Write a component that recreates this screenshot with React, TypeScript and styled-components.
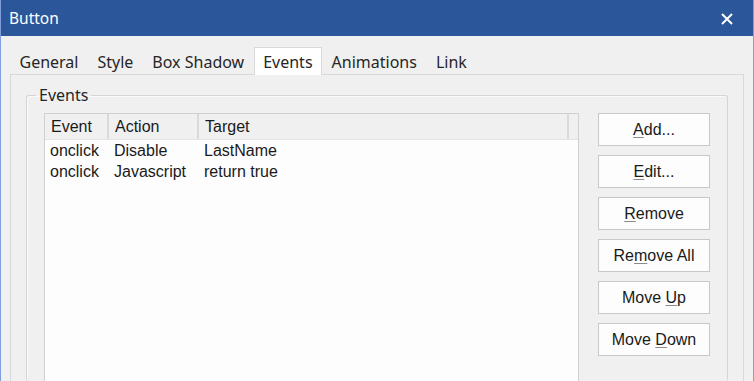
import React, { FC } from 'react';
import styled, { createGlobalStyle } from 'styled-components';

const GlobalStyle = createGlobalStyle`
  html, body {
    margin: 0;
    padding: 0;
    background: #f0f0f0;
  }
`;

interface EventRow {
  event: string;
  action: string;
  target: string;
}

const rows: EventRow[] = [
  { event: 'onclick', action: 'Disable', target: 'LastName' },
  { event: 'onclick', action: 'Javascript', target: 'return true' },
];

const tabs = ['General', 'Style', 'Box Shadow', 'Events', 'Animations', 'Link'];

// label with the access key underlined
const buttons: { before: string; key: string; after: string }[] = [
  { before: '', key: 'A', after: 'dd...' },
  { before: '', key: 'E', after: 'dit...' },
  { before: '', key: 'R', after: 'emove' },
  { before: 'Re', key: 'm', after: 'ove All' },
  { before: 'Move ', key: 'U', after: 'p' },
  { before: 'Move ', key: 'D', after: 'own' },
];

const App: FC = () => {
  return (
    <>
      <GlobalStyle />
      <Window>
        <TitleBar>
          <Title>Button</Title>
          <CloseButton aria-label="Close">
            <svg width="12" height="12" viewBox="0 0 12 12">
              <path d="M1 1 L11 11 M11 1 L1 11" stroke="#fff" strokeWidth="2" />
            </svg>
          </CloseButton>
        </TitleBar>
        <Body>
          <TabStrip>
            {tabs.map((t) => (
              <Tab key={t} $active={t === 'Events'}>{t}</Tab>
            ))}
          </TabStrip>
          <Panel>
            <GroupBox>
              <Legend>Events</Legend>
              <GroupContent>
                <ListView>
                  <HeaderRow>
                    <HeaderCell $w={64}>Event</HeaderCell>
                    <HeaderCell $w={90}>Action</HeaderCell>
                    <HeaderCell $w={370}>Target</HeaderCell>
                    <HeaderStub />
                  </HeaderRow>
                  {rows.map((r, i) => (
                    <Row key={i}>
                      <Cell $w={64}>{r.event}</Cell>
                      <Cell $w={90}>{r.action}</Cell>
                      <Cell $w={370}>{r.target}</Cell>
                    </Row>
                  ))}
                </ListView>
                <ButtonColumn>
                  {buttons.map((b) => (
                    <DialogButton key={b.before + b.key + b.after}>
                      <span>
                        {b.before}
                        <u>{b.key}</u>
                        {b.after}
                      </span>
                    </DialogButton>
                  ))}
                </ButtonColumn>
              </GroupContent>
            </GroupBox>
          </Panel>
        </Body>
      </Window>
    </>
  );
};

const Window = styled.div`
  width: 754px;
  height: 381px;
  box-sizing: border-box;
  display: flex;
  flex-direction: column;
  overflow: hidden;
  border-left: 1px solid #7f9fdc;
  border-right: 1px solid #7f9fdc;
  background: #f0f0f0;
`;

const TitleBar = styled.div`
  height: 36px;
  flex-shrink: 0;
  display: flex;
  align-items: center;
  justify-content: space-between;
  background: #2b579a;
  padding: 0 20px 0 8px;
`;

const Title = styled.span`
  font-family: "Noto Sans", "Open Sans", sans-serif;
  font-size: 15.5px;
  color: #fff;
`;

const CloseButton = styled.div`
  width: 12px;
  height: 12px;
  display: flex;
  margin-top: 1px;
`;

const Body = styled.div`
  flex: 1;
  display: flex;
  flex-direction: column;
  padding: 11px 9px 0 9px;
  min-height: 0;
`;

const TabStrip = styled.div`
  display: flex;
  height: 28px;
  position: relative;
  z-index: 1;
`;

const Tab = styled.div<{ $active?: boolean }>`
  box-sizing: border-box;
  height: ${(p) => (p.$active ? '28px' : '27px')};
  padding: 0 8.5px;
  margin-top: ${(p) => (p.$active ? '0' : '1px')};
  display: flex;
  align-items: center;
  font-family: "Noto Sans", "Open Sans", sans-serif;
  font-size: 16px;
  color: #262626;
  background: ${(p) => (p.$active ? '#fff' : 'transparent')};
  border: 1px solid ${(p) => (p.$active ? '#d9d9d9' : 'transparent')};
  border-bottom: none;
`;

const Panel = styled.div`
  flex: 1;
  margin-top: -1px;
  border: 1px solid #d9d9d9;
  border-bottom: none;
  padding: 10px 15px 0 15px;
  min-height: 0;
`;

const GroupBox = styled.fieldset`
  margin: 0;
  height: 100%;
  box-sizing: border-box;
  border: 1px solid #d5d5d5;
  border-bottom: none;
  border-radius: 3px;
  box-shadow: inset 1px 1px 0 #fafafa;
  padding: 8px 16px 0 17px;
`;

const Legend = styled.legend`
  font-family: "Noto Sans", "Open Sans", sans-serif;
  font-size: 16px;
  line-height: 20px;
  color: #262626;
  padding: 0 3px;
  margin-left: -8px;
`;

const GroupContent = styled.div`
  display: flex;
  gap: 19px;
  height: 100%;
`;

const ListView = styled.div`
  width: 535px;
  box-sizing: border-box;
  height: 300px;
  background: #fdfdfd;
  border: 1px solid #d0d0d0;
  font-family: "Liberation Sans", Arial, sans-serif;
  font-size: 16px;
  color: #1a1a1a;
`;

const HeaderRow = styled.div`
  display: flex;
  height: 25px;
  background: #f0f0f0;
  border-bottom: 1px solid #e3e3e3;
`;

const HeaderCell = styled.div<{ $w: number }>`
  width: ${(p) => p.$w}px;
  box-sizing: border-box;
  padding-left: 6px;
  display: flex;
  align-items: center;
  border-right: 2px solid #dadada;
`;

const HeaderStub = styled.div`
  flex: 1;
`;

const Row = styled.div`
  display: flex;
  height: 21px;
  align-items: center;
`;

const Cell = styled.div<{ $w: number }>`
  width: ${(p) => p.$w}px;
  box-sizing: border-box;
  padding-left: 5px;
  white-space: nowrap;
`;

const ButtonColumn = styled.div`
  display: flex;
  flex-direction: column;
  gap: 9px;
`;

const DialogButton = styled.div`
  width: 112px;
  height: 33px;
  box-sizing: border-box;
  display: flex;
  align-items: center;
  justify-content: center;
  background: #fdfdfd;
  border: 1px solid #c8c8c8;
  font-family: "Liberation Sans", Arial, sans-serif;
  font-size: 16px;
  color: #1a1a1a;
  white-space: pre;
  u {
    text-decoration-color: #8a8a8a;
    text-underline-offset: 2px;
  }
`;

export default App;
